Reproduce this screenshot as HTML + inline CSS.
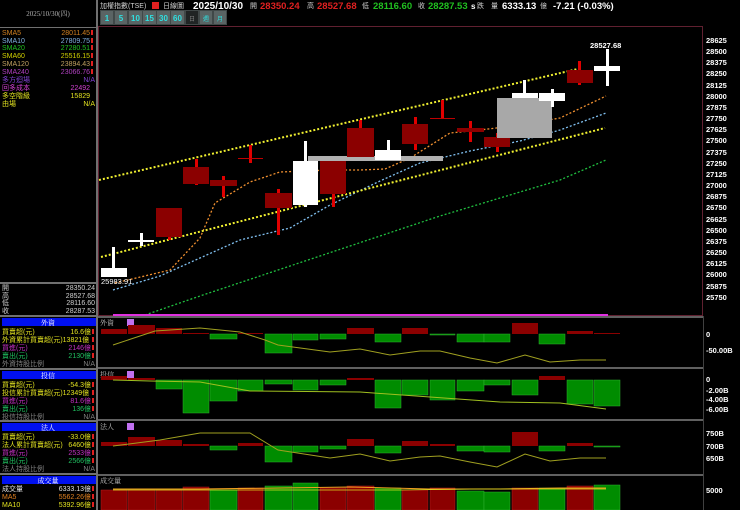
<!DOCTYPE html>
<html><head><meta charset="utf-8"><style>
html,body{margin:0;padding:0;background:#000;width:740px;height:510px;overflow:hidden}
svg{display:block}
text{font-family:"Liberation Sans","Noto Sans CJK TC",sans-serif}
.l{font-size:7px;font-family:"Liberation Serif","Noto Serif CJK SC",serif}
.ax{font-size:7.5px;font-weight:bold;fill:#fff}
</style></head><body>
<svg width="740" height="510" viewBox="0 0 740 510" xmlns="http://www.w3.org/2000/svg">
<rect width="740" height="510" fill="#000"/>
<rect x="96" y="0" width="2" height="510" fill="#707070"/>
<text x="48" y="16" class="l" fill="#b0b0b0" text-anchor="middle">2025/10/30(四)</text>
<rect x="0" y="27" width="96" height="1" fill="#707070"/>
<g class="l">
<text x="2" y="35" fill="#d08020">SMA5</text><text x="90" y="35" fill="#d08020" text-anchor="end">28011.45</text>
<text x="2" y="43" fill="#80b0e0">SMA10</text><text x="90" y="43" fill="#80b0e0" text-anchor="end">27809.75</text>
<text x="2" y="50" fill="#20c020">SMA20</text><text x="90" y="50" fill="#20c020" text-anchor="end">27280.51</text>
<text x="2" y="58" fill="#d0d000">SMA60</text><text x="90" y="58" fill="#d0d000" text-anchor="end">25516.15</text>
<text x="2" y="66" fill="#c0a060">SMA120</text><text x="90" y="66" fill="#c0a060" text-anchor="end">23894.43</text>
<text x="2" y="74" fill="#b040c0">SMA240</text><text x="90" y="74" fill="#b040c0" text-anchor="end">23066.76</text>
<text x="2" y="82" fill="#8040d0">多方迴場</text><text x="95" y="82" fill="#8040d0" text-anchor="end">N/A</text>
<text x="2" y="90" fill="#d040d0">回多成本</text><text x="90" y="90" fill="#d040d0" text-anchor="end">22492</text>
<text x="2" y="98" fill="#e0e020">多空階級</text><text x="90" y="98" fill="#e0e020" text-anchor="end">15829</text>
<text x="2" y="106" fill="#e0e020">由場</text><text x="95" y="106" fill="#e0e020" text-anchor="end">N/A</text>
</g>
<g fill="#e02020"><rect x="91" y="30" width="2" height="5"/><rect x="91" y="38" width="2" height="5"/><rect x="91" y="45" width="2" height="5"/><rect x="91" y="53" width="2" height="5"/><rect x="91" y="61" width="2" height="5"/><rect x="91" y="69" width="2" height="5"/></g>
<rect x="0" y="282" width="96" height="2" fill="#707070"/>
<g class="l" fill="#d0d0d0">
<text x="2" y="290">開</text><text x="95" y="290" text-anchor="end">28350.24</text>
<text x="2" y="298">高</text><text x="95" y="298" text-anchor="end">28527.68</text>
<text x="2" y="305">低</text><text x="95" y="305" text-anchor="end">28116.60</text>
<text x="2" y="313">收</text><text x="95" y="313" text-anchor="end">28287.53</text>
</g>
<rect x="0" y="315" width="96" height="2" fill="#707070"/>
<rect x="2" y="318" width="94" height="8" fill="#0010f0"/><text x="48" y="325" class="l" fill="#fff" text-anchor="middle">外資</text>
<g class="l">
<text x="2" y="334" fill="#e0e020">買賣超(元)</text><text x="91" y="334" fill="#e0e020" text-anchor="end">16.6億</text>
<text x="2" y="342" fill="#e0e020">外資累計買賣超(元)13821億</text>
<text x="91" y="350" fill="#c030c0" text-anchor="end">2146億</text><text x="2" y="350" fill="#c030c0">買進(元)</text>
<text x="2" y="358" fill="#20c060">賣出(元)</text><text x="91" y="358" fill="#20c060" text-anchor="end">2130億</text>
<text x="2" y="366" fill="#808080">外資持股比例</text><text x="95" y="366" fill="#808080" text-anchor="end">N/A</text>
</g>
<rect x="0" y="368" width="96" height="2" fill="#707070"/>
<rect x="2" y="371" width="94" height="8" fill="#0010f0"/><text x="48" y="378" class="l" fill="#fff" text-anchor="middle">投信</text>
<g class="l">
<text x="2" y="387" fill="#e0e020">買賣超(元)</text><text x="91" y="387" fill="#e0e020" text-anchor="end">-54.3億</text>
<text x="2" y="395" fill="#e0e020">投信累計買賣超(元)12349億</text>
<text x="2" y="403" fill="#c030c0">買進(元)</text><text x="91" y="403" fill="#c030c0" text-anchor="end">81.6億</text>
<text x="2" y="411" fill="#20c060">賣出(元)</text><text x="91" y="411" fill="#20c060" text-anchor="end">136億</text>
<text x="2" y="419" fill="#808080">投信持股比例</text><text x="95" y="419" fill="#808080" text-anchor="end">N/A</text>
</g>
<rect x="0" y="420" width="96" height="2" fill="#707070"/>
<rect x="2" y="423" width="94" height="8" fill="#0010f0"/><text x="48" y="430" class="l" fill="#fff" text-anchor="middle">法人</text>
<g class="l">
<text x="2" y="439" fill="#e0e020">買賣超(元)</text><text x="91" y="439" fill="#e0e020" text-anchor="end">-33.0億</text>
<text x="2" y="447" fill="#e0e020">法人累計買賣超(元)</text><text x="91" y="447" fill="#e0e020" text-anchor="end">6460億</text>
<text x="2" y="455" fill="#c030c0">買進(元)</text><text x="91" y="455" fill="#c030c0" text-anchor="end">2533億</text>
<text x="2" y="463" fill="#20c060">賣出(元)</text><text x="91" y="463" fill="#20c060" text-anchor="end">2566億</text>
<text x="2" y="471" fill="#808080">法人持股比例</text><text x="95" y="471" fill="#808080" text-anchor="end">N/A</text>
</g>
<rect x="0" y="473" width="96" height="2" fill="#707070"/>
<rect x="2" y="476" width="94" height="8" fill="#0010f0"/><text x="48" y="483" class="l" fill="#fff" text-anchor="middle">成交量</text>
<g class="l">
<text x="2" y="491" fill="#e0e0e0">成交量</text><text x="91" y="491" fill="#e0e0e0" text-anchor="end">6333.13億</text>
<text x="2" y="499" fill="#e08020">MA5</text><text x="91" y="499" fill="#e08020" text-anchor="end">5562.26億</text>
<text x="2" y="507" fill="#e0e020">MA10</text><text x="91" y="507" fill="#e0e020" text-anchor="end">5392.96億</text>
</g>
<g fill="#e02020"><rect x="92" y="329" width="2" height="5"/><rect x="92" y="337" width="2" height="5"/><rect x="92" y="345" width="2" height="5"/><rect x="92" y="353" width="2" height="5"/><rect x="92" y="382" width="2" height="5"/><rect x="92" y="390" width="2" height="5"/><rect x="92" y="398" width="2" height="5"/><rect x="92" y="406" width="2" height="5"/><rect x="92" y="434" width="2" height="5"/><rect x="92" y="442" width="2" height="5"/><rect x="92" y="450" width="2" height="5"/><rect x="92" y="458" width="2" height="5"/><rect x="92" y="486" width="2" height="5"/><rect x="92" y="494" width="2" height="5"/><rect x="92" y="502" width="2" height="5"/></g>

<g class="l">
<text x="100" y="8" fill="#d0d0d0">加權指數(TSE)</text>
<rect x="152" y="2" width="7" height="7" fill="#e02020"/>
<text x="163" y="8" fill="#d0d0d0">日線圖</text>
<text x="193" y="9" style="font-size:10px;font-weight:bold;font-family:'Liberation Sans',sans-serif" fill="#fff">2025/10/30</text>
<text x="250" y="8" fill="#d0d0d0">開</text>
<text x="260" y="9" style="font-size:9.5px;font-weight:bold;font-family:'Liberation Sans',sans-serif" fill="#e02020">28350.24</text>
<text x="307" y="8" fill="#d0d0d0">高</text>
<text x="317" y="9" style="font-size:9.5px;font-weight:bold;font-family:'Liberation Sans',sans-serif" fill="#e02020">28527.68</text>
<text x="362" y="8" fill="#d0d0d0">低</text>
<text x="373" y="9" style="font-size:9.5px;font-weight:bold;font-family:'Liberation Sans',sans-serif" fill="#20c020">28116.60</text>
<text x="418" y="8" fill="#d0d0d0">收</text>
<text x="428" y="9" style="font-size:9.5px;font-weight:bold;font-family:'Liberation Sans',sans-serif" fill="#20c020">28287.53</text>
<text x="471" y="9" style="font-size:8px;font-weight:bold;font-family:'Liberation Sans',sans-serif" fill="#fff">s</text>
<text x="477" y="8" fill="#d0d0d0">跌</text>
<text x="491" y="8" fill="#d0d0d0">量</text>
<text x="502" y="9" style="font-size:9.5px;font-weight:bold;font-family:'Liberation Sans',sans-serif" fill="#fff">6333.13</text>
<text x="540" y="8" fill="#d0d0d0">億</text>
<text x="553" y="9" style="font-size:9.5px;font-weight:bold;font-family:'Liberation Sans',sans-serif" fill="#fff">-7.21 (-0.03%)</text>
</g>
<rect x="100" y="10" width="127" height="15" fill="#404848"/>
<g fill="#5a6464"><rect x="101" y="11" width="12" height="13"/><rect x="115" y="11" width="12" height="13"/><rect x="129" y="11" width="13" height="13"/><rect x="143" y="11" width="13" height="13"/><rect x="157" y="11" width="13" height="13"/><rect x="171" y="11" width="13" height="13"/><rect x="200" y="11" width="12" height="13"/><rect x="214" y="11" width="12" height="13"/></g>
<rect x="186" y="11" width="12" height="13" fill="#202424"/>
<g style="font-size:8px;font-weight:bold" fill="#30e0e0" text-anchor="middle">
<text x="107" y="21">1</text><text x="121" y="21">5</text><text x="135.5" y="21">10</text><text x="149.5" y="21">15</text><text x="163.5" y="21">30</text><text x="177.5" y="21">60</text>
</g>
<g class="l" text-anchor="middle"><text x="192" y="21" fill="#808080" style="font-size:6px">日</text><text x="206" y="21" fill="#30e0e0" style="font-size:6px">週</text><text x="220" y="21" fill="#30e0e0" style="font-size:6px">月</text></g>

<rect x="98.5" y="26.5" width="604" height="289" fill="none" stroke="#602030"/>
<g class="ax">
<text x="706" y="43">28625</text><text x="706" y="54">28500</text><text x="706" y="65">28375</text><text x="706" y="76">28250</text><text x="706" y="88">28125</text><text x="706" y="99">28000</text><text x="706" y="110">27875</text><text x="706" y="121">27750</text><text x="706" y="132">27625</text><text x="706" y="143">27500</text><text x="706" y="155">27375</text><text x="706" y="166">27250</text><text x="706" y="177">27125</text><text x="706" y="188">27000</text><text x="706" y="199">26875</text><text x="706" y="210">26750</text><text x="706" y="222">26625</text><text x="706" y="233">26500</text><text x="706" y="244">26375</text><text x="706" y="255">26250</text><text x="706" y="266">26125</text><text x="706" y="277">26000</text><text x="706" y="289">25875</text><text x="706" y="300">25750</text>
</g>
<g fill="none" stroke-dasharray="2,2" stroke-width="1.3">
<polyline stroke="#20c040" points="145,315 200,296 260,276 320,256 380,236 440,216 500,198 560,180 606,160"/>
<polyline stroke="#80c0f0" points="113,290 160,276 200,258 240,240 290,228 330,205 380,181 420,163 470,151 520,141 560,130 606,113"/>
<polyline stroke="#f09030" points="115,283 170,270 200,238 215,203 250,182 280,172 330,170 360,170 385,169 410,158 450,133 480,130 520,125 560,118 606,96"/>
</g>
<g fill="none" stroke="#f0f030" stroke-dasharray="2,2" stroke-width="2">
<line x1="99" y1="180" x2="582" y2="68"/>
<line x1="101" y1="257" x2="605" y2="128"/>
</g>
<g>
<rect x="112" y="247" width="3" height="22" fill="#fff"/><rect x="101" y="268" width="26" height="9" fill="#fff"/>
<rect x="140" y="233" width="3" height="13" fill="#fff"/><rect x="128" y="240" width="26" height="2" fill="#fff"/>
<rect x="168" y="230" width="3" height="10" fill="#e00000"/><rect x="156" y="208" width="26" height="29" fill="#8b0000"/>
<rect x="195" y="159" width="3" height="26" fill="#e00000"/><rect x="183" y="167" width="26" height="17" fill="#8b0000"/>
<rect x="222" y="176" width="3" height="21" fill="#e00000"/><rect x="210" y="180" width="27" height="6" fill="#8b0000"/>
<rect x="249" y="145" width="3" height="18" fill="#e00000"/><rect x="238" y="158" width="25" height="1" fill="#c00000"/>
<rect x="277" y="189" width="3" height="46" fill="#e00000"/><rect x="265" y="193" width="27" height="15" fill="#8b0000"/>
<rect x="308" y="156" width="135" height="5" fill="#b0b0b0"/>
<rect x="304" y="141" width="3" height="66" fill="#fff"/><rect x="293" y="161" width="25" height="44" fill="#fff"/>
<rect x="332" y="190" width="3" height="17" fill="#e00000"/><rect x="320" y="161" width="26" height="33" fill="#8b0000"/>
<rect x="359" y="120" width="3" height="10" fill="#e00000"/><rect x="347" y="128" width="27" height="29" fill="#8b0000"/>
<rect x="387" y="140" width="3" height="12" fill="#fff"/><rect x="375" y="150" width="26" height="10" fill="#fff"/>
<rect x="414" y="117" width="3" height="33" fill="#e00000"/><rect x="402" y="124" width="26" height="20" fill="#8b0000"/>
<rect x="441" y="100" width="3" height="19" fill="#e00000"/><rect x="430" y="118" width="25" height="1" fill="#c00000"/>
<rect x="469" y="121" width="3" height="21" fill="#e00000"/><rect x="457" y="128" width="27" height="4" fill="#8b0000"/>
<rect x="496" y="133" width="3" height="19" fill="#e00000"/><rect x="484" y="137" width="26" height="10" fill="#8b0000"/>
<rect x="497" y="98" width="55" height="40" fill="#a8a8a8"/>
<rect x="523" y="80" width="3" height="14" fill="#fff"/><rect x="512" y="93" width="26" height="5" fill="#fff"/>
<rect x="551" y="89" width="3" height="18" fill="#fff"/><rect x="539" y="93" width="26" height="8" fill="#fff"/>
<rect x="578" y="61" width="3" height="24" fill="#e00000"/><rect x="567" y="70" width="26" height="13" fill="#8b0000"/>
<rect x="606" y="49" width="3" height="37" fill="#fff"/><rect x="594" y="66" width="26" height="5" fill="#fff"/>
</g>
<text x="590" y="48" style="font-size:7.5px;font-weight:bold" fill="#fff">28527.68</text>
<text x="101" y="284" style="font-size:7.5px" fill="#fff">25983.91</text>
<rect x="113" y="314" width="495" height="2" fill="#e030e0"/>
<rect x="98" y="316" width="605" height="2" fill="#606060"/>

<text x="100" y="325" class="l" fill="#c0c0c0">外資</text>
<rect x="127" y="319" width="7" height="7" fill="#c070f0"/>
<g fill="#8b0000">
<rect x="101" y="329" width="26" height="5"/><rect x="128" y="325" width="27" height="9"/><rect x="156" y="328" width="26" height="6"/><rect x="183" y="333" width="26" height="1"/><rect x="238" y="333" width="25" height="1"/><rect x="347" y="328" width="27" height="6"/><rect x="402" y="328" width="26" height="6"/><rect x="512" y="323" width="26" height="11"/><rect x="567" y="331" width="26" height="3"/><rect x="594" y="333" width="26" height="1"/>
</g>
<g fill="#008c00" stroke="#30b030" stroke-width="0.5">
<rect x="210" y="334" width="27" height="5"/><rect x="265" y="334" width="27" height="19"/><rect x="293" y="334" width="25" height="6"/><rect x="320" y="334" width="26" height="5"/><rect x="375" y="334" width="26" height="8"/><rect x="430" y="334" width="25" height="1"/><rect x="457" y="334" width="27" height="8"/><rect x="484" y="334" width="26" height="8"/><rect x="539" y="334" width="26" height="10"/>
</g>
<polyline fill="none" stroke="#a0a020" stroke-width="1" points="113,345 155,331 200,328 240,332 265,340 278,345 330,352 360,349 390,355 420,351 440,351 470,358 497,363 525,355 550,362 580,360 606,360"/>
<g class="ax"><text x="706" y="337">0</text><text x="706" y="353">-50.00B</text></g>
<rect x="98" y="367" width="605" height="2" fill="#606060"/>

<text x="100" y="377" class="l" fill="#c0c0c0">投信</text>
<rect x="127" y="371" width="7" height="7" fill="#c070f0"/>
<g fill="#8b0000"><rect x="101" y="376" width="26" height="4"/><rect x="128" y="378" width="27" height="2"/><rect x="347" y="378" width="27" height="2"/><rect x="539" y="376" width="26" height="4"/></g>
<g fill="#008c00" stroke="#30b030" stroke-width="0.5">
<rect x="156" y="380" width="26" height="9"/><rect x="183" y="380" width="26" height="33"/><rect x="210" y="380" width="27" height="21"/><rect x="238" y="380" width="25" height="11"/><rect x="265" y="380" width="27" height="4"/><rect x="293" y="380" width="25" height="10"/><rect x="320" y="380" width="26" height="5"/><rect x="375" y="380" width="26" height="28"/><rect x="402" y="380" width="26" height="15"/><rect x="430" y="380" width="25" height="20"/><rect x="457" y="380" width="27" height="11"/><rect x="484" y="380" width="26" height="5"/><rect x="512" y="380" width="26" height="15"/><rect x="567" y="380" width="26" height="24"/><rect x="594" y="380" width="26" height="26"/>
</g>
<polyline fill="none" stroke="#a0c020" stroke-width="1" points="113,380 150,381 200,382 250,391 360,392 430,397 500,402 560,403 606,409"/>
<g class="ax"><text x="706" y="382">0</text><text x="706" y="393">-2.00B</text><text x="706" y="402">-4.00B</text><text x="706" y="412">-6.00B</text></g>
<rect x="98" y="419" width="605" height="2" fill="#606060"/>

<text x="100" y="429" class="l" fill="#c0c0c0">法人</text>
<rect x="127" y="423" width="7" height="7" fill="#c070f0"/>
<g fill="#8b0000"><rect x="101" y="442" width="26" height="4"/><rect x="128" y="437" width="27" height="9"/><rect x="156" y="440" width="26" height="6"/><rect x="183" y="444" width="26" height="2"/><rect x="238" y="443" width="25" height="3"/><rect x="347" y="439" width="27" height="7"/><rect x="402" y="441" width="26" height="5"/><rect x="430" y="444" width="25" height="2"/><rect x="512" y="432" width="26" height="14"/><rect x="567" y="443" width="26" height="3"/></g>
<g fill="#008c00" stroke="#30b030" stroke-width="0.5">
<rect x="210" y="446" width="27" height="4"/><rect x="265" y="446" width="27" height="16"/><rect x="293" y="446" width="25" height="6"/><rect x="320" y="446" width="26" height="3"/><rect x="375" y="446" width="26" height="7"/><rect x="457" y="446" width="27" height="5"/><rect x="484" y="446" width="26" height="6"/><rect x="539" y="446" width="26" height="5"/><rect x="594" y="446" width="26" height="1"/>
</g>
<polyline fill="none" stroke="#a0a020" stroke-width="1" points="113,446 160,440 200,433 250,433 278,450 330,458 360,454 390,461 420,457 440,456 470,462 497,467 525,454 550,461 580,458 606,458"/>
<g class="ax"><text x="706" y="436">750B</text><text x="706" y="449">700B</text><text x="706" y="461">650B</text></g>
<rect x="98" y="474" width="605" height="2" fill="#606060"/>

<text x="100" y="483" class="l" fill="#c0c0c0">成交量</text>
<g fill="#8b0000" stroke="#b02020" stroke-width="0.5">
<rect x="101" y="490" width="26" height="20"/><rect x="128" y="490" width="27" height="20"/><rect x="156" y="490" width="26" height="20"/><rect x="183" y="487" width="26" height="23"/><rect x="238" y="488" width="25" height="22"/><rect x="320" y="488" width="26" height="22"/><rect x="347" y="486" width="27" height="24"/><rect x="402" y="490" width="26" height="20"/><rect x="430" y="488" width="25" height="22"/><rect x="512" y="488" width="26" height="22"/><rect x="567" y="486" width="26" height="24"/>
</g>
<g fill="#008c00" stroke="#30b030" stroke-width="0.5">
<rect x="210" y="490" width="27" height="20"/><rect x="265" y="486" width="27" height="24"/><rect x="293" y="483" width="25" height="27"/><rect x="375" y="488" width="26" height="22"/><rect x="457" y="491" width="27" height="19"/><rect x="484" y="492" width="26" height="18"/><rect x="539" y="488" width="26" height="22"/><rect x="594" y="485" width="26" height="25"/>
</g>
<polyline fill="none" stroke="#f0a020" stroke-width="1" points="113,489 200,489 280,488 350,487 430,489 500,489 560,488 606,488"/>
<polyline fill="none" stroke="#e0e020" stroke-width="0.8" points="113,490 250,490 400,490 480,489 606,489"/>
<g class="ax"><text x="706" y="493">5000</text></g>
<rect x="703" y="316" width="1" height="194" fill="#404040"/>
</svg>
</body></html>
